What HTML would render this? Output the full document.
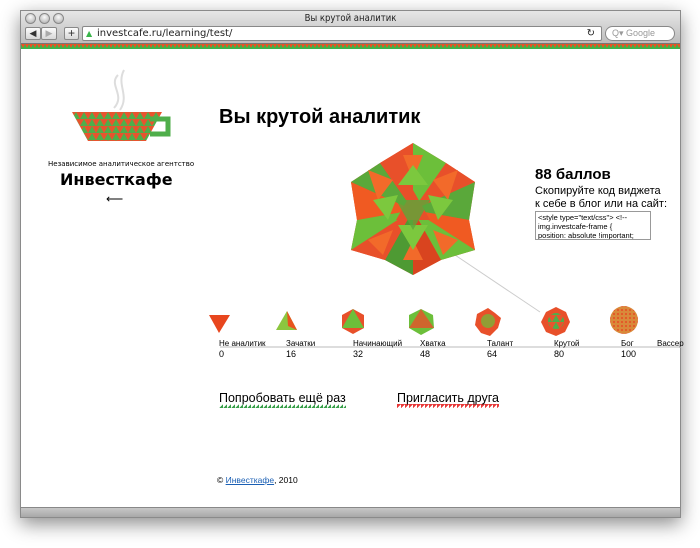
<!DOCTYPE html>
<html><head><meta charset="utf-8"><style>
*{margin:0;padding:0;box-sizing:border-box}
body{width:700px;height:548px;background:#fff;position:relative;overflow:hidden;font-family:"Liberation Sans",Arial,sans-serif;color:#000}
.win{position:absolute;left:20px;top:10px;width:661px;height:508px;background:#fff;box-shadow:0 6px 18px rgba(0,0,0,.45);border:1px solid #8a8a8a}
.tb{position:absolute;left:0;top:0;width:100%;height:33px;background:linear-gradient(#e6e6e6,#bdbdbd);border-bottom:1px solid #777}
.title{position:absolute;top:2px;width:100%;text-align:center;font-size:10px;color:#222;font-family:"DejaVu Sans",sans-serif;transform:scaleX(.85)}
.lights span{position:absolute;top:2px;width:11px;height:11px;border-radius:50%;background:radial-gradient(circle at 50% 35%,#fafafa,#a8a8a8);border:1px solid #888}
.btn{position:absolute;top:16px;height:13px;background:linear-gradient(#fbfbfb,#d7d7d7);border:1px solid #888;border-radius:2px;font-size:9px;line-height:11px;text-align:center;color:#333}
.url{position:absolute;left:61px;top:15px;width:520px;height:15px;background:#fff;border:1px solid #888;border-radius:2px;font-size:10px;line-height:13px;padding-left:14px;color:#222;font-family:"DejaVu Sans",sans-serif}
.srch{position:absolute;left:584px;top:15px;width:70px;height:15px;background:#fff;border:1px solid #888;border-radius:8px;font-size:9px;line-height:13px;padding-left:6px;color:#999}
.stripe{position:absolute;left:0;top:33px;width:100%;height:5px}
.status{position:absolute;left:0;bottom:0;width:100%;height:10px;background:linear-gradient(#c7c7c7,#a8a8a8);border-top:1px solid #888}
.a{position:absolute;font-size:8px;color:#000}
.n{position:absolute;font-size:9px}
.h1{position:absolute;left:198px;top:95px;font-size:20px;font-weight:bold}
</style></head><body>
<div class="win">
 <div class="tb">
  <div class="lights"><span style="left:4px"></span><span style="left:18px"></span><span style="left:32px"></span></div>
  <div class="title">Вы крутой аналитик</div>
  <div class="btn" style="left:4px;width:16px">◀</div><div class="btn" style="left:20px;width:16px;color:#aaa">▶</div>
  <div class="btn" style="left:43px;width:15px;font-size:12px">+</div>
  <div class="url"><span style="position:absolute;left:3px;color:#39b54a;font-size:8px">▲</span>investcafe.ru/learning/test/<span style="position:absolute;right:6px;font-size:10px">↻</span></div>
  <div class="srch">Q▾ Google</div>
 </div>
 <svg class="stripe" width="661" height="5"><defs><pattern id="st" width="4" height="5" patternUnits="userSpaceOnUse"><rect width="4" height="5" fill="#39b54a"/><path d="M0 0H4L2 4Z" fill="#f04e23"/></pattern></defs><rect width="661" height="5" fill="url(#st)"/></svg>
 <div class="h1">Вы крутой аналитик</div>
 <div style="position:absolute;left:514px;top:155px;font-size:15px;font-weight:bold">88 баллов</div>
 <div style="position:absolute;left:514px;top:174px;font-size:11px;line-height:13px">Скопируйте код виджета<br>к себе в блог или на сайт:</div>
 <div style="position:absolute;left:514px;top:200px;width:116px;height:29px;border:1px solid #999;font-size:7.5px;line-height:9px;padding:1px 2px;overflow:hidden;color:#000">&lt;style type="text/css"&gt; &lt;!--<br>img.investcafe-frame {<br>position: absolute !important;</div>
 <div style="position:absolute;left:199px;top:335px;width:461px;height:2px;background:#ddd"></div>
 <div class="a" style="left:198px;top:328px">Не аналитик</div><div class="a" style="left:265px;top:328px">Зачатки</div><div class="a" style="left:332px;top:328px">Начинающий</div><div class="a" style="left:399px;top:328px">Хватка</div><div class="a" style="left:466px;top:328px">Талант</div><div class="a" style="left:533px;top:328px">Крутой</div><div class="a" style="left:600px;top:328px">Бог</div><div class="a" style="left:636px;top:328px">Вассер</div>
 <div class="n" style="left:198px;top:338px">0</div><div class="n" style="left:265px;top:338px">16</div><div class="n" style="left:332px;top:338px">32</div><div class="n" style="left:399px;top:338px">48</div><div class="n" style="left:466px;top:338px">64</div><div class="n" style="left:533px;top:338px">80</div><div class="n" style="left:600px;top:338px">100</div>
 <div style="position:absolute;left:198px;top:380px;font-size:12.5px;padding-bottom:3px;background:linear-gradient(135deg,transparent 50%,#39a04a 50%) bottom left/4px 4px repeat-x">Попробовать ещё раз</div>
 <div style="position:absolute;left:376px;top:380px;font-size:12.5px;padding-bottom:3px;background:linear-gradient(-45deg,transparent 50%,#e83a3a 50%) bottom left/4px 4px repeat-x">Пригласить друга</div>
 <div style="position:absolute;left:196px;top:464px;font-size:8.5px">© <span style="color:#1a5fb4;text-decoration:underline">Инвесткафе</span>, 2010</div>
 <div style="position:absolute;left:27px;top:149px;font-size:7px;font-family:'DejaVu Sans',sans-serif">Независимое аналитическое агентство</div>
 <div style="position:absolute;left:39px;top:159px;font-size:16px;font-weight:bold;font-family:'DejaVu Sans',sans-serif">Инвесткафе</div>
 <div style="position:absolute;left:85px;top:181px;font-size:12px">⟵</div>
 <div class="status"></div>
</div>
<svg width="700" height="548" style="position:absolute;left:0;top:0">
<defs>
<pattern id="tri" width="8" height="7" patternUnits="userSpaceOnUse"><rect width="8" height="7" fill="#e8542e"/><path d="M4 0L8 7H0Z" fill="#4fae4a"/></pattern>
<pattern id="dots" width="4" height="4" patternUnits="userSpaceOnUse"><rect width="4" height="4" fill="#d9893a"/><circle cx="2" cy="2" r="1" fill="#e84c23"/></pattern>
</defs>
<path d="M118 75 C108 85,126 95,114 108 M124 70 C116 85,130 95,120 110" stroke="#ddd" stroke-width="2" fill="none"/>
<path d="M72 112H162L146 141H88Z" fill="url(#tri)"/>
<path d="M150 119H168V134L150 134" stroke="#4fae4a" stroke-width="5" fill="none"/>
<line x1="455" y1="255" x2="540" y2="312" stroke="#ccc" stroke-width="1"/>
<g transform="translate(413,210)">
<polygon points="0,-67 33,-47 62,-28 56,10 62,40 28,50 0,65 -28,50 -62,40 -56,10 -62,-28 -33,-47" fill="#e8502a"/>
<path d="M0 0L0 -67L33 -47Z" fill="#6cbf3a"/><path d="M0 0L33 -47L62 -28Z" fill="#e8502a"/><path d="M0 0L62 -28L56 10Z" fill="#5aa83a"/><path d="M0 0L56 10L62 40Z" fill="#f05a22"/><path d="M0 0L62 40L28 50Z" fill="#6cbf3a"/><path d="M0 0L28 50L0 65Z" fill="#d9441f"/><path d="M0 0L0 65L-28 50Z" fill="#4e9a33"/><path d="M0 0L-28 50L-62 40Z" fill="#e8502a"/><path d="M0 0L-62 40L-56 10Z" fill="#6cbf3a"/><path d="M0 0L-56 10L-62 -28Z" fill="#f05a22"/><path d="M0 0L-62 -28L-33 -47Z" fill="#5aa83a"/><path d="M0 0L-33 -47L0 -67Z" fill="#e8502a"/>
<path d="M-45 -40L-20 -30L-35 -10Z M45 -40L20 -30L35 -10Z M-45 30L-20 20L-30 45Z M45 30L20 20L30 45Z M-10 -55L10 -55L0 -30Z M-10 50L10 50L0 30Z" fill="#f26a2a"/>
<path d="M-40 -10L-15 -15L-25 10Z M40 -10L15 -15L25 10Z M-15 15L15 15L0 40Z M-15 -25L15 -25L0 -45Z" fill="#7cc83e"/>
<path d="M0 -20L17 10L-17 10Z" fill="#e8502a"/><path d="M0 20L17 -10L-17 -10Z" fill="#5aa83a" opacity=".8"/>
</g>
<path d="M209 315H230L219 333Z" fill="#e8461e"/>
<path d="M287 311L297 330H276Z" fill="#8cc63f"/><path d="M287 311L297 330L288 326Z" fill="#e8541e"/>
<polygon points="353,309 364,315 364,328 353,334 342,328 342,315" fill="#e8502a"/><path d="M353 309L364 328H342Z" fill="#6cbf3a"/>
<polygon points="421,309 433,315 434,328 421,335 409,328 409,315" fill="#6cbf3a"/><path d="M421 309L434 328L409 328Z" fill="#e8502a" opacity=".8"/>
<polygon points="488,308 495,313 501,318 498,328 490,336 481,333 475,325 477,314" fill="#e8502a"/><circle cx="488" cy="321" r="7" fill="#6cbf3a" opacity=".7"/>
<polygon points="556,307 566,312 570,322 565,332 556,336 546,332 541,322 546,312" fill="#e8502a"/><circle cx="556" cy="321" r="8" fill="url(#tri)"/>
<circle cx="624" cy="320" r="14" fill="url(#dots)"/>
</svg>
</body></html>
